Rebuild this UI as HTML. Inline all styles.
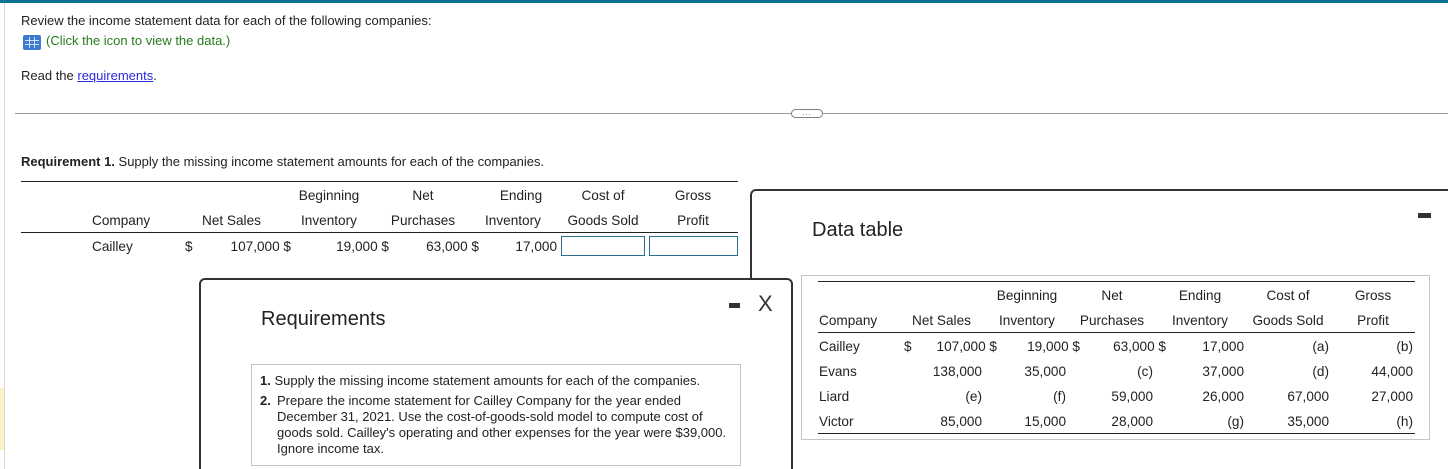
<!DOCTYPE html>
<html><head><meta charset="utf-8"><style>
*{margin:0;padding:0;box-sizing:border-box}
html,body{width:1448px;height:469px;overflow:hidden}
body{background:#fff;font-family:"Liberation Sans",Arial,sans-serif;font-size:13px;color:#222;position:relative}
.a{position:absolute;white-space:nowrap;line-height:14px}
.t{font-size:13.6px}
.r{text-align:right}
.c{text-align:center}
.rule{position:absolute;height:1px;background:#222}
</style></head><body>
<div style="position:absolute;left:0;top:0;width:1448px;height:3px;background:#0d7294"></div>
<div style="position:absolute;left:4px;top:3px;width:1px;height:466px;background:#d8d8dc"></div>
<div style="position:absolute;left:0;top:388px;width:4px;height:62px;background:#fbf0c8"></div>

<div class="a" style="left:21px;top:14px">Review the income statement data for each of the following companies:</div>
<div style="position:absolute;left:23px;top:35px;width:18px;height:15px;background:#3d7ad0;border-radius:2px"></div>
<svg style="position:absolute;left:23px;top:35px" width="18" height="15"><g stroke="#cfe0fa" stroke-width="1"><line x1="2" y1="5.5" x2="16" y2="5.5"/><line x1="2" y1="9.5" x2="16" y2="9.5"/><line x1="6.5" y1="2" x2="6.5" y2="13"/><line x1="11.5" y1="2" x2="11.5" y2="13"/></g></svg>
<div class="a" style="left:46px;top:34px;color:#287a1e">(Click the icon to view the data.)</div>
<div class="a" style="left:21px;top:69px">Read the <span style="color:#2a2ae0;text-decoration:underline">requirements</span>.</div>

<div style="position:absolute;left:15px;top:113px;width:1433px;height:1px;background:#9a9ca4"></div>
<div style="position:absolute;left:791px;top:109px;width:32px;height:9px;border:1px solid #7a7e88;border-radius:5px;background:#fff;font-size:8px;line-height:5px;text-align:center;color:#555;letter-spacing:1px">...</div>

<div class="a" style="left:21px;top:155px"><b>Requirement 1.</b> Supply the missing income statement amounts for each of the companies.</div>

<div class="rule" style="left:21px;top:181px;width:717px"></div>
<div class="rule" style="left:21px;top:232px;width:717px"></div>
<div class="a c t" style="left:289px;top:189px;width:80px">Beginning</div>
<div class="a c t" style="left:390px;top:189px;width:66px">Net</div>
<div class="a c t" style="left:481px;top:189px;width:80px">Ending</div>
<div class="a c t" style="left:563px;top:189px;width:80px">Cost of</div>
<div class="a c t" style="left:653px;top:189px;width:80px">Gross</div>
<div class="a t" style="left:92px;top:214px">Company</div>
<div class="a t" style="left:202px;top:214px">Net Sales</div>
<div class="a c t" style="left:289px;top:214px;width:80px">Inventory</div>
<div class="a c t" style="left:386px;top:214px;width:74px">Purchases</div>
<div class="a c t" style="left:481px;top:214px;width:64px">Inventory</div>
<div class="a c t" style="left:563px;top:214px;width:80px">Goods Sold</div>
<div class="a c t" style="left:653px;top:214px;width:80px">Profit</div>
<div class="a t" style="left:92px;top:240px">Cailley</div>
<div class="a t" style="left:185px;top:240px">$</div>
<div class="a r t" style="left:200px;top:240px;width:91px">107,000 $</div>
<div class="a r t" style="left:300px;top:240px;width:89px">19,000 $</div>
<div class="a r t" style="left:390px;top:240px;width:89px">63,000 $</div>
<div class="a r t" style="left:480px;top:240px;width:77px">17,000</div>
<div style="position:absolute;left:561px;top:236px;width:84px;height:20px;border:1px solid #2a6f8f"></div>
<div style="position:absolute;left:649px;top:236px;width:89px;height:20px;border:1px solid #2a6f8f"></div>

<!-- Data table modal -->
<div style="position:absolute;left:750px;top:189px;width:720px;height:290px;border:2px solid #333;border-radius:6px;background:#fff"></div>
<div class="a" style="left:812px;top:219px;font-size:20px;line-height:22px">Data table</div>
<div style="position:absolute;left:1418px;top:213px;width:13px;height:5px;background:#333"></div>
<div style="position:absolute;left:801px;top:275px;width:629px;height:165px;border:1px solid #c4c4c4"></div>
<div class="rule" style="left:818px;top:281px;width:597px"></div>
<div class="rule" style="left:818px;top:332px;width:597px"></div>
<div class="rule" style="left:818px;top:433px;width:597px"></div>
<div class="a c t" style="left:987px;top:289px;width:80px">Beginning</div>
<div class="a c t" style="left:1082px;top:289px;width:60px">Net</div>
<div class="a c t" style="left:1160px;top:289px;width:80px">Ending</div>
<div class="a c t" style="left:1248px;top:289px;width:80px">Cost of</div>
<div class="a c t" style="left:1333px;top:289px;width:80px">Gross</div>
<div class="a t" style="left:819px;top:314px">Company</div>
<div class="a t" style="left:912px;top:314px">Net Sales</div>
<div class="a c t" style="left:987px;top:314px;width:80px">Inventory</div>
<div class="a c t" style="left:1072px;top:314px;width:80px">Purchases</div>
<div class="a c t" style="left:1160px;top:314px;width:80px">Inventory</div>
<div class="a c t" style="left:1248px;top:314px;width:80px">Goods Sold</div>
<div class="a c t" style="left:1333px;top:314px;width:80px">Profit</div>

<div class="a t" style="left:819px;top:340px">Cailley</div>
<div class="a t" style="left:904px;top:340px">$</div>
<div class="a r t" style="left:920px;top:340px;width:77px">107,000 $</div>
<div class="a r t" style="left:1000px;top:340px;width:80px">19,000 $</div>
<div class="a r t" style="left:1080px;top:340px;width:86px">63,000 $</div>
<div class="a r t" style="left:1170px;top:340px;width:74px">17,000</div>
<div class="a r t" style="left:1250px;top:340px;width:79px">(a)</div>
<div class="a r t" style="left:1330px;top:340px;width:83px">(b)</div>

<div class="a t" style="left:819px;top:365px">Evans</div>
<div class="a r t" style="left:920px;top:365px;width:62px">138,000</div>
<div class="a r t" style="left:1000px;top:365px;width:66px">35,000</div>
<div class="a r t" style="left:1080px;top:365px;width:73px">(c)</div>
<div class="a r t" style="left:1170px;top:365px;width:74px">37,000</div>
<div class="a r t" style="left:1250px;top:365px;width:79px">(d)</div>
<div class="a r t" style="left:1330px;top:365px;width:83px">44,000</div>

<div class="a t" style="left:819px;top:390px">Liard</div>
<div class="a r t" style="left:920px;top:390px;width:62px">(e)</div>
<div class="a r t" style="left:1000px;top:390px;width:66px">(f)</div>
<div class="a r t" style="left:1080px;top:390px;width:73px">59,000</div>
<div class="a r t" style="left:1170px;top:390px;width:74px">26,000</div>
<div class="a r t" style="left:1250px;top:390px;width:79px">67,000</div>
<div class="a r t" style="left:1330px;top:390px;width:83px">27,000</div>

<div class="a t" style="left:819px;top:415px">Victor</div>
<div class="a r t" style="left:920px;top:415px;width:62px">85,000</div>
<div class="a r t" style="left:1000px;top:415px;width:66px">15,000</div>
<div class="a r t" style="left:1080px;top:415px;width:73px">28,000</div>
<div class="a r t" style="left:1170px;top:415px;width:74px">(g)</div>
<div class="a r t" style="left:1250px;top:415px;width:79px">35,000</div>
<div class="a r t" style="left:1330px;top:415px;width:83px">(h)</div>

<!-- Requirements modal -->
<div style="position:absolute;left:199px;top:278px;width:594px;height:200px;border:2px solid #333;border-radius:6px;background:#fff"></div>
<div class="a" style="left:261px;top:308px;font-size:20px;line-height:22px">Requirements</div>
<div style="position:absolute;left:729px;top:303px;width:11px;height:5px;background:#333"></div>
<div class="a" style="left:758px;top:292px;font-size:22px;line-height:24px;color:#333">X</div>
<div style="position:absolute;left:251px;top:364px;width:490px;height:102px;border:1px solid #c4c4c4"></div>
<div class="a" style="left:260px;top:374px"><b>1.</b> Supply the missing income statement amounts for each of the companies.</div>
<div class="a" style="left:260px;top:393px;line-height:16px;white-space:normal;width:475px"><b style="position:absolute;left:0">2.</b><div style="padding-left:17px">Prepare the income statement for Cailley Company for the year ended December 31, 2021. Use the cost-of-goods-sold model to compute cost of goods sold. Cailley's operating and other expenses for the year were $39,000. Ignore income tax.</div></div>
</body></html>
